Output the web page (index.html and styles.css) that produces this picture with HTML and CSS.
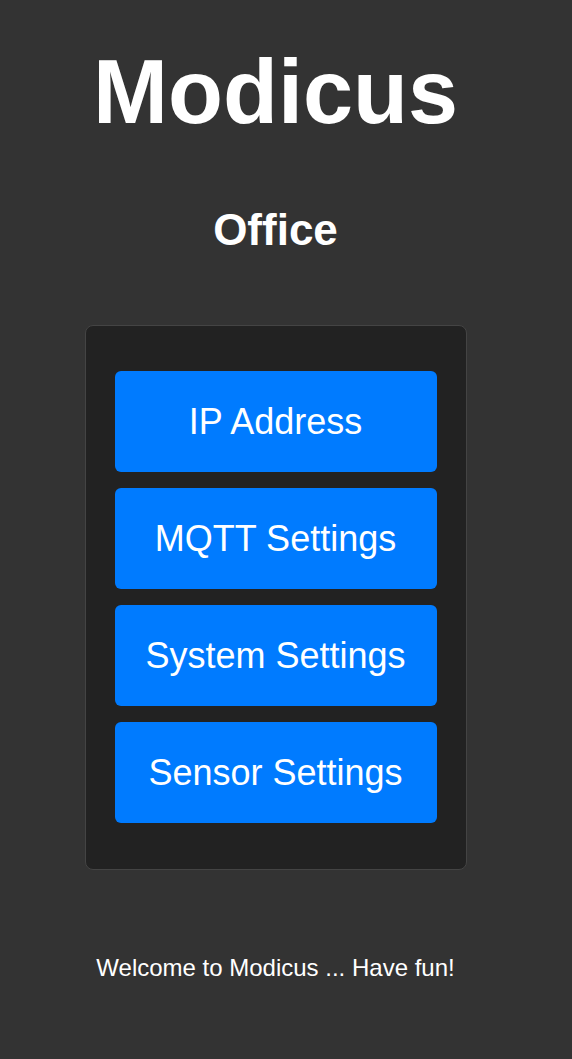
FILE: index.html
```html
<!DOCTYPE html>
<html>
<head>
<meta charset="utf-8">
<link rel="stylesheet" href="styles.css">
</head>
<body>
<div class="page">
  <h1 class="title">Modicus</h1>
  <h2 class="subtitle">Office</h2>
  <div class="card">
    <a class="btn">IP Address</a>
    <a class="btn">MQTT Settings</a>
    <a class="btn">System Settings</a>
    <a class="btn">Sensor Settings</a>
  </div>
  <p class="footer">Welcome to Modicus ... Have fun!</p>
</div>
</body>
</html>
```
FILE: styles.css
```css
html, body {
  margin: 0;
  background: #333333;
}
body {
  font-family: "Liberation Sans", Arial, sans-serif;
  color: #ffffff;
}
.page {
  width: 551px;
  padding-top: 47px;
  display: flex;
  flex-direction: column;
  align-items: center;
}
.title {
  margin: 0;
  font-size: 90px;
  line-height: 1;
  font-weight: bold;
}
.subtitle {
  margin: 71px 0 0;
  font-size: 44px;
  line-height: 1;
  font-weight: bold;
}
.card {
  margin-top: 73px;
  width: 322px;
  padding: 45px 29px 46px;
  background: #222222;
  border: 1px solid #444444;
  border-radius: 8px;
  display: flex;
  flex-direction: column;
  gap: 16px;
}
.btn {
  height: 101px;
  background: #007bff;
  border-radius: 6px;
  color: #ffffff;
  font-size: 36px;
  display: flex;
  align-items: center;
  justify-content: center;
}
.footer {
  margin: 86px 0 0;
  font-size: 24px;
  line-height: 1;
}
```
